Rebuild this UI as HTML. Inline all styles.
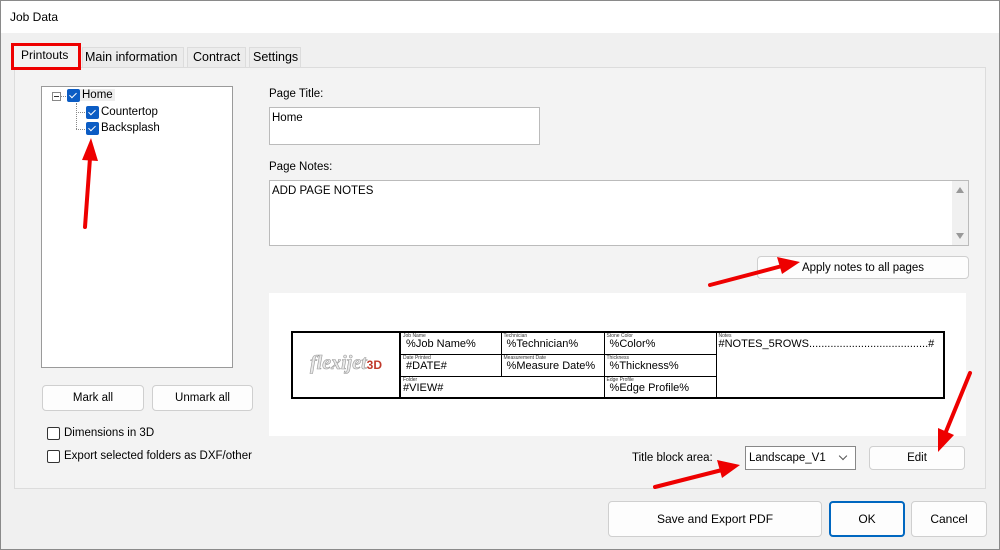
<!DOCTYPE html>
<html><head><style>
*{box-sizing:border-box;margin:0;padding:0}
body{width:1000px;height:550px;background:#f0f0f0;font-family:"Liberation Sans",sans-serif;font-size:11.5px;color:#000;position:relative;overflow:hidden}
.a{position:absolute}
.btn{position:absolute;background:#fdfdfd;border:1px solid #cfcfcf;border-radius:4px;display:flex;align-items:center;justify-content:center;font-size:11.5px}
.cb{position:absolute;width:13px;height:13px;background:#0b5cc4;border-radius:2px}
.cb:after{content:"";position:absolute;left:4px;top:2px;width:3px;height:6px;border:solid #fff;border-width:0 1.5px 1.5px 0;transform:rotate(45deg)}
.ucb{position:absolute;width:13px;height:13px;border:1px solid #333;border-radius:2px;background:#fff}
.tb td{border:1px solid #000;vertical-align:top;padding:0 2px;font-size:11px;line-height:11px}
.tb small{display:block;font-size:5px;line-height:6px;color:#333}
</style></head><body>
<div class="a" style="left:0;top:0;width:1000px;height:33px;background:#fff"></div>
<div class="a" style="left:10px;top:10px;font-size:12px">Job Data</div>
<div class="a" style="left:0;top:0;width:1000px;height:550px;border:1px solid #8a8a8a;pointer-events:none"></div>
<div class="a" style="left:14px;top:67px;width:972px;height:422px;border:1px solid #dcdcdc;background:#f3f3f3"></div>
<div class="a" style="left:13px;top:44px;width:66px;height:25px;background:#f3f3f3;border:1px solid #dcdcdc;border-bottom:none"></div>
<div class="a" style="left:11px;top:43px;width:70px;height:27px;border:3px solid #e00"></div>
<div class="a" style="left:21px;top:48px;font-size:12px">Printouts</div>
<div class="a" style="left:82px;top:47px;width:102px;height:21px;background:#ececec;border:1px solid #dcdcdc"></div>
<div class="a" style="left:85px;top:50px;font-size:12.5px">Main information</div>
<div class="a" style="left:187px;top:47px;width:59px;height:21px;background:#ececec;border:1px solid #dcdcdc"></div>
<div class="a" style="left:193px;top:50px;font-size:12.5px">Contract</div>
<div class="a" style="left:249px;top:47px;width:52px;height:21px;background:#ececec;border:1px solid #dcdcdc"></div>
<div class="a" style="left:253px;top:50px;font-size:12.5px">Settings</div>
<div class="a" style="left:41px;top:86px;width:192px;height:282px;background:#fff;border:1px solid #9a9a9a"></div>
<div class="a" style="left:52px;top:92px;width:9px;height:9px;border:1px solid #888;background:#fff"></div>
<div class="a" style="left:54px;top:96px;width:5px;height:1px;background:#333"></div>
<div class="a" style="left:61px;top:96px;width:5px;border-top:1px dotted #888"></div>
<div class="a" style="left:76px;top:103px;height:26px;border-left:1px dotted #888"></div>
<div class="a" style="left:76px;top:112px;width:9px;border-top:1px dotted #888"></div>
<div class="a" style="left:76px;top:129px;width:9px;border-top:1px dotted #888"></div>
<div class="cb" style="left:67px;top:89px"></div><div class="a" style="left:80px;top:89px;background:#eee;padding:0 2px">Home</div>
<div class="cb" style="left:86px;top:106px"></div><div class="a" style="left:101px;top:106px">Countertop</div>
<div class="cb" style="left:86px;top:122px"></div><div class="a" style="left:101px;top:122px">Backsplash</div>
<div class="btn" style="left:42px;top:385px;width:102px;height:26px">Mark all</div>
<div class="btn" style="left:152px;top:385px;width:101px;height:26px">Unmark all</div>
<div class="ucb" style="left:47px;top:427px"></div><div class="a" style="left:64px;top:427px">Dimensions in 3D</div>
<div class="ucb" style="left:47px;top:450px"></div><div class="a" style="left:64px;top:450px">Export selected folders as DXF/other</div>
<div class="a" style="left:269px;top:88px">Page Title:</div>
<div class="a" style="left:269px;top:107px;width:271px;height:38px;background:#fff;border:1px solid #bbb;padding:4px 2px">Home</div>
<div class="a" style="left:269px;top:161px">Page Notes:</div>
<div class="a" style="left:269px;top:180px;width:700px;height:66px;background:#fff;border:1px solid #bbb;padding:4px 2px">ADD PAGE NOTES</div>
<div class="a" style="left:952px;top:181px;width:16px;height:64px;background:#f0f0f0"></div>
<div class="a" style="left:956px;top:187px;border:4px solid transparent;border-bottom:6px solid #999;border-top:0"></div>
<div class="a" style="left:956px;top:233px;border:4px solid transparent;border-top:6px solid #999;border-bottom:0"></div>
<div class="btn" style="left:757px;top:256px;width:212px;height:23px">Apply notes to all pages</div>
<div class="a" style="left:269px;top:293px;width:697px;height:143px;background:#fff"></div>
<table class="tb a" style="left:291px;top:331px;width:654px;height:68px;border-collapse:collapse;border:2px solid #000">
<tr style="height:22px"><td rowspan="3" style="width:108px;border:2px solid #000;vertical-align:middle;text-align:center;position:relative"><span style="font-family:'Liberation Serif';font-style:italic;font-weight:bold;font-size:20px;color:#e8e8e8;-webkit-text-stroke:0.6px #999">flexijet</span><span style="color:#c0392b;font-weight:bold;font-size:12px">3D</span></td>
<td style="width:101px"><small>Job Name</small>&nbsp;%Job Name%</td><td style="width:103px"><small>Technician</small>&nbsp;%Technician%</td><td style="width:112px"><small>Stone Color</small>&nbsp;%Color%</td><td rowspan="3"><small>Notes</small>#NOTES_5ROWS.......................................#</td></tr>
<tr style="height:22px"><td><small>Date Printed</small>&nbsp;#DATE#</td><td><small>Measurement Date</small>&nbsp;%Measure Date%</td><td><small>Thickness</small>&nbsp;%Thickness%</td></tr>
<tr style="height:22px"><td colspan="2"><small>Folder</small>#VIEW#</td><td><small>Edge Profile</small>&nbsp;%Edge Profile%</td></tr>
</table>
<div class="a" style="left:632px;top:452px">Title block area:</div>
<div class="a" style="left:745px;top:446px;width:111px;height:24px;background:#fff;border:1px solid #888;padding:5px 3px">Landscape_V1</div>
<div class="a" style="left:840px;top:453px;width:6px;height:6px;border:solid #555;border-width:0 1px 1px 0;transform:rotate(45deg)"></div>
<div class="btn" style="left:869px;top:446px;width:96px;height:24px">Edit</div>
<div class="btn" style="left:608px;top:501px;width:214px;height:36px;font-size:12px">Save and Export PDF</div>
<div class="btn" style="left:829px;top:501px;width:76px;height:36px;border:2px solid #0067c0;font-size:12px">OK</div>
<div class="btn" style="left:911px;top:501px;width:76px;height:36px;font-size:12px">Cancel</div>
<svg class="a" style="left:0;top:0" width="1000" height="550">
<g stroke="#e00" stroke-width="4" fill="#e00" stroke-linecap="round">
<line x1="85" y1="227" x2="90" y2="158"/><polygon points="91,138 82,160 98,161" stroke="none"/>
<line x1="710" y1="285" x2="782" y2="266"/><polygon points="800,262 777,257 782,274" stroke="none"/>
<line x1="655" y1="487" x2="722" y2="470"/><polygon points="740,465 717,460 722,478" stroke="none"/>
<line x1="970" y1="373" x2="945" y2="434"/><polygon points="938,452 938,428 954,435" stroke="none"/>
</g></svg>
</body></html>
